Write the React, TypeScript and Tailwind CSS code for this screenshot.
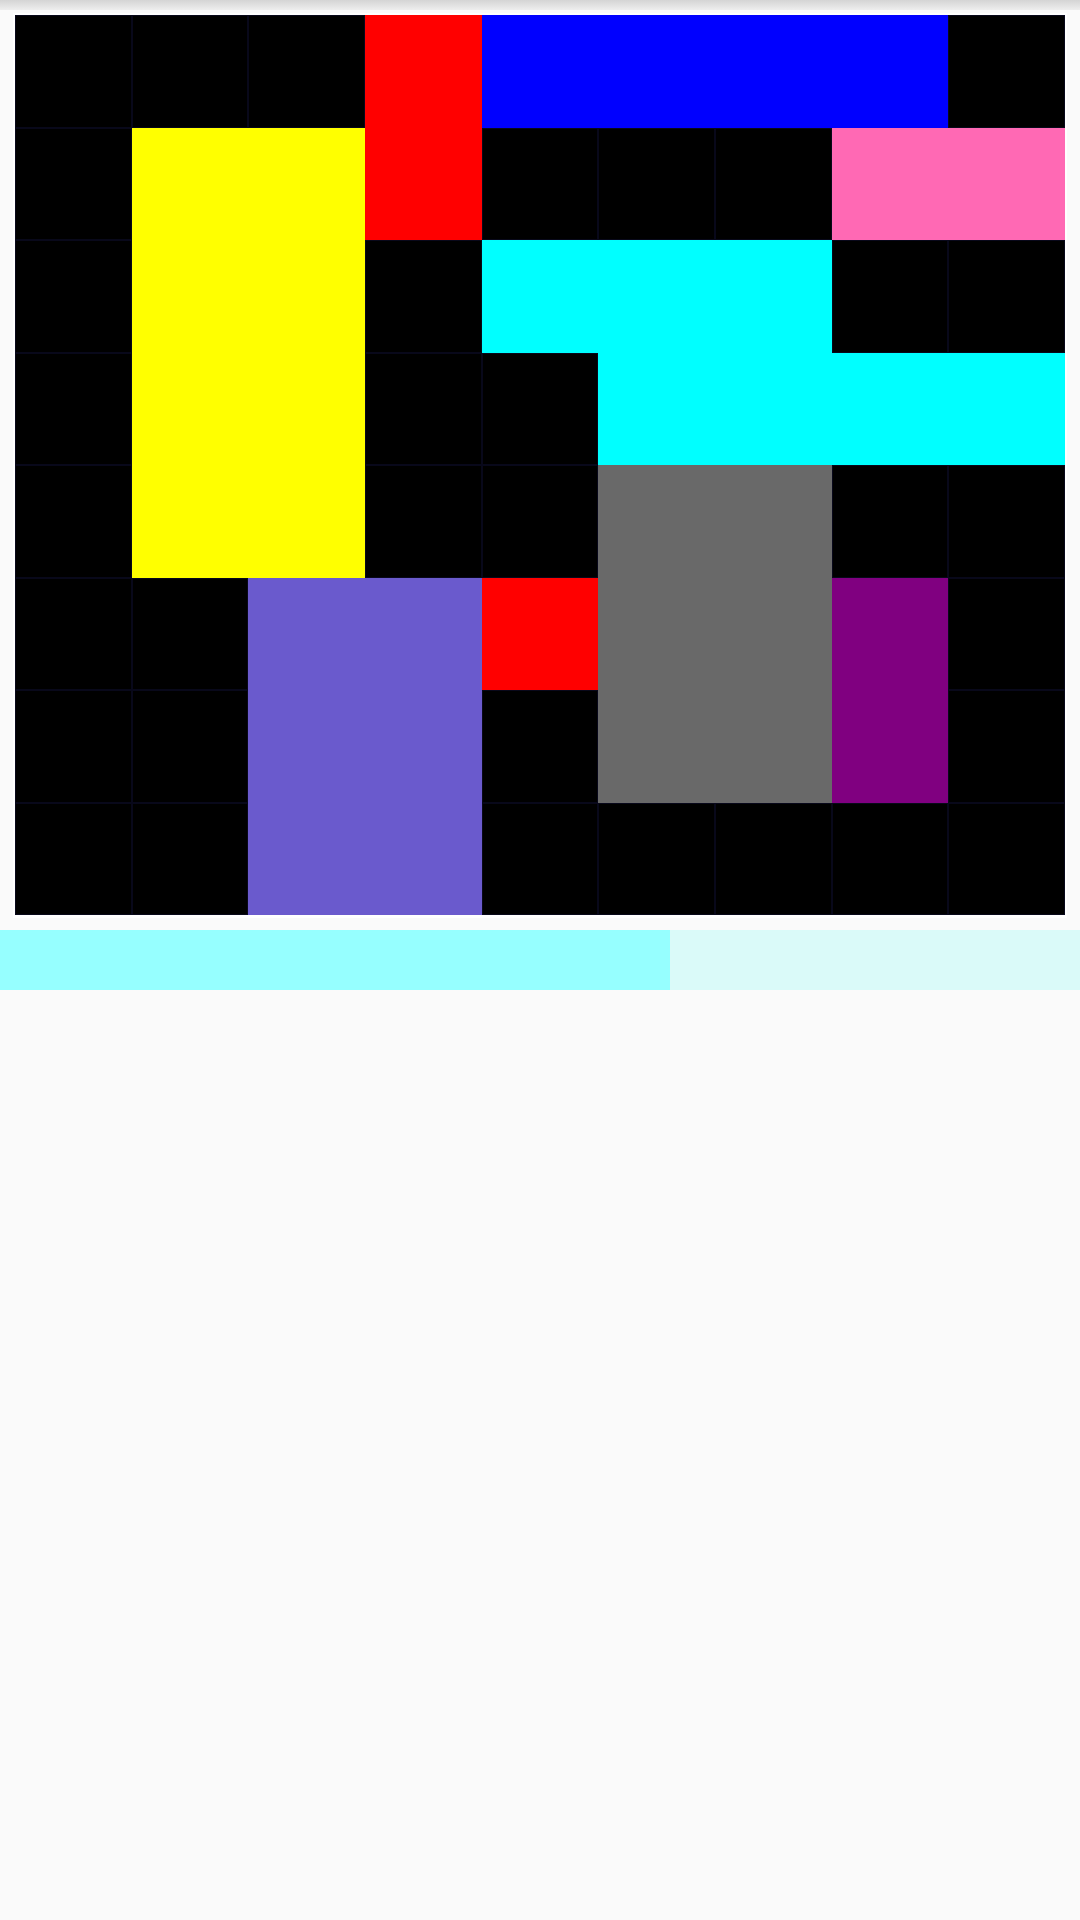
import React from "react";

type Block = { cls: string; color: string };

// Each tile on the 9x8 board: placement classes plus fill colour.
const BLACK = "bg-black border border-[#08081a]";

const blocks: Block[] = [
  // coloured pieces
  { cls: "col-start-4 row-start-1 row-span-2", color: "bg-[#ff0000]" },
  { cls: "col-start-5 row-start-1 col-span-4", color: "bg-[#0000ff]" },
  { cls: "col-start-2 row-start-2 col-span-2 row-span-4", color: "bg-[#ffff00]" },
  { cls: "col-start-8 row-start-2 col-span-2", color: "bg-[#ff69b4]" },
  { cls: "col-start-5 row-start-3 col-span-3", color: "bg-[#00ffff]" },
  { cls: "col-start-6 row-start-4 col-span-4", color: "bg-[#00ffff]" },
  { cls: "col-start-6 row-start-5 col-span-2 row-span-3", color: "bg-[#696969]" },
  { cls: "col-start-3 row-start-6 col-span-2 row-span-3", color: "bg-[#6a5acd]" },
  { cls: "col-start-5 row-start-6", color: "bg-[#ff0000]" },
  { cls: "col-start-8 row-start-6 row-span-2", color: "bg-[#800080]" },
  // empty squares
  { cls: "col-start-1 row-start-1", color: BLACK },
  { cls: "col-start-2 row-start-1", color: BLACK },
  { cls: "col-start-3 row-start-1", color: BLACK },
  { cls: "col-start-9 row-start-1", color: BLACK },
  { cls: "col-start-1 row-start-2", color: BLACK },
  { cls: "col-start-5 row-start-2", color: BLACK },
  { cls: "col-start-6 row-start-2", color: BLACK },
  { cls: "col-start-7 row-start-2", color: BLACK },
  { cls: "col-start-1 row-start-3", color: BLACK },
  { cls: "col-start-4 row-start-3", color: BLACK },
  { cls: "col-start-8 row-start-3", color: BLACK },
  { cls: "col-start-9 row-start-3", color: BLACK },
  { cls: "col-start-1 row-start-4", color: BLACK },
  { cls: "col-start-4 row-start-4", color: BLACK },
  { cls: "col-start-5 row-start-4", color: BLACK },
  { cls: "col-start-1 row-start-5", color: BLACK },
  { cls: "col-start-4 row-start-5", color: BLACK },
  { cls: "col-start-5 row-start-5", color: BLACK },
  { cls: "col-start-8 row-start-5", color: BLACK },
  { cls: "col-start-9 row-start-5", color: BLACK },
  { cls: "col-start-1 row-start-6", color: BLACK },
  { cls: "col-start-2 row-start-6", color: BLACK },
  { cls: "col-start-9 row-start-6", color: BLACK },
  { cls: "col-start-1 row-start-7", color: BLACK },
  { cls: "col-start-2 row-start-7", color: BLACK },
  { cls: "col-start-5 row-start-7", color: BLACK },
  { cls: "col-start-9 row-start-7", color: BLACK },
  { cls: "col-start-1 row-start-8", color: BLACK },
  { cls: "col-start-2 row-start-8", color: BLACK },
  { cls: "col-start-5 row-start-8", color: BLACK },
  { cls: "col-start-6 row-start-8", color: BLACK },
  { cls: "col-start-7 row-start-8", color: BLACK },
  { cls: "col-start-8 row-start-8", color: BLACK },
  { cls: "col-start-9 row-start-8", color: BLACK },
];

export default function App() {
  return (
    <div className="w-[1080px] min-h-[1920px] bg-[#fafafa] flex flex-col">
      {/* toolbar shadow */}
      <div className="h-[10px] bg-gradient-to-b from-[#d4d4d4] to-[#eeeeee]" />
      <div className="pt-[3px] px-[13px]">
        <div className="bg-white p-[2px] pb-[3px]">
          <div className="w-[1050px] h-[900px] grid grid-cols-9 grid-rows-8">
            {blocks.map((b, i) => (
              <div key={i} className={`${b.cls} ${b.color}`} />
            ))}
          </div>
        </div>
      </div>
      {/* progress bar */}
      <div className="mt-[12px] h-[60px] flex">
        <div className="w-[670px] bg-[#96ffff]" />
        <div className="flex-1 bg-[#dafaf9]" />
      </div>
    </div>
  );
}
